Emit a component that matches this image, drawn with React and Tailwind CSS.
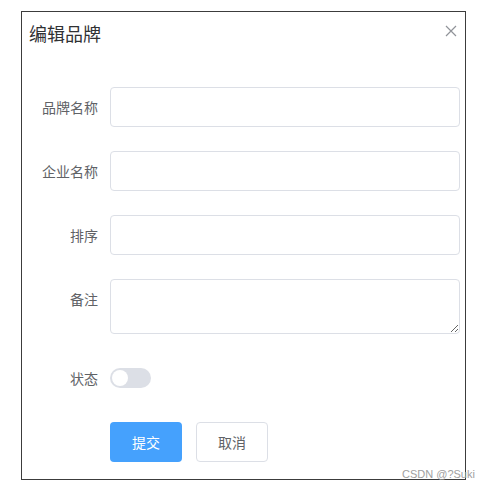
import { useState } from "react";

const FONT = { fontFamily: '"Noto Sans CJK SC", "Liberation Sans", sans-serif' };

const FIELDS = [
  { key: "brandName", label: "品牌名称" },
  { key: "companyName", label: "企业名称" },
  { key: "ordered", label: "排序" }
];

export default function App() {
  const [form, setForm] = useState({ brandName: "", companyName: "", ordered: "", description: "" });
  const [status, setStatus] = useState(false);

  const update = (key) => (e) => setForm({ ...form, [key]: e.target.value });

  return (
    <div className="relative h-[488px] w-[484px] bg-white pl-[21px] pt-[11px]" style={FONT}>
      <div className="h-[469px] w-[445px] border border-[#3c3c3c]">
        {/* Header */}
        <div className="flex items-start justify-between pl-[7px] pr-[8px] pt-[9px]">
          <span className="text-[18px] leading-6 text-[#303133]">编辑品牌</span>
          <button className="mt-[4px] text-[#909399]">
            <svg width="12" height="12" viewBox="0 0 12 12" fill="none" stroke="currentColor" strokeWidth="1.2">
              <path d="M1 1 L11 11 M11 1 L1 11" />
            </svg>
          </button>
        </div>

        {/* Form */}
        <div className="flex flex-col gap-[24px] pr-[5px] pt-[42px]">
          {FIELDS.map((f) => (
            <div key={f.key} className="flex items-center">
              <label className="w-[88px] shrink-0 pr-[12px] text-right text-[14px] text-[#606266]">{f.label}</label>
              <input
                value={form[f.key]}
                onChange={update(f.key)}
                className="h-[40px] flex-1 rounded-[4px] border border-[#dcdfe6] px-[15px] text-[14px] outline-none"
              />
            </div>
          ))}

          <div className="flex items-start">
            <label className="w-[88px] shrink-0 pr-[12px] text-right text-[14px] leading-[40px] text-[#606266]">备注</label>
            <textarea
              value={form.description}
              onChange={update("description")}
              className="h-[55px] flex-1 resize-y rounded-[4px] border border-[#dcdfe6] px-[15px] py-[5px] text-[14px] outline-none"
            />
          </div>

          <div className="flex h-[40px] items-center">
            <label className="w-[88px] shrink-0 pr-[12px] text-right text-[14px] text-[#606266]">状态</label>
            <button
              onClick={() => setStatus(!status)}
              className={`relative h-[20px] w-[41px] rounded-full ${status ? "bg-[#409eff]" : "bg-[#dcdfe6]"}`}
            >
              <span className={`absolute top-[2px] h-[16px] w-[16px] rounded-full bg-white ${status ? "left-[23px]" : "left-[2px]"}`} />
            </button>
          </div>

          <div className="flex items-center gap-[14px] pl-[88px]">
            <button className="h-[40px] w-[72px] rounded-[4px] bg-[#45a1fd] text-[14px] text-white">提交</button>
            <button className="h-[40px] w-[72px] rounded-[4px] border border-[#dcdfe6] bg-white text-[14px] text-[#606266]">取消</button>
          </div>
        </div>
      </div>

      {/* CSDN watermark */}
      <span className="absolute left-[402px] top-[466px] text-[11px] text-[#a0a0a0]" style={{ fontFamily: '"Liberation Sans", sans-serif' }}>
        CSDN @?Suki
      </span>
    </div>
  );
}
